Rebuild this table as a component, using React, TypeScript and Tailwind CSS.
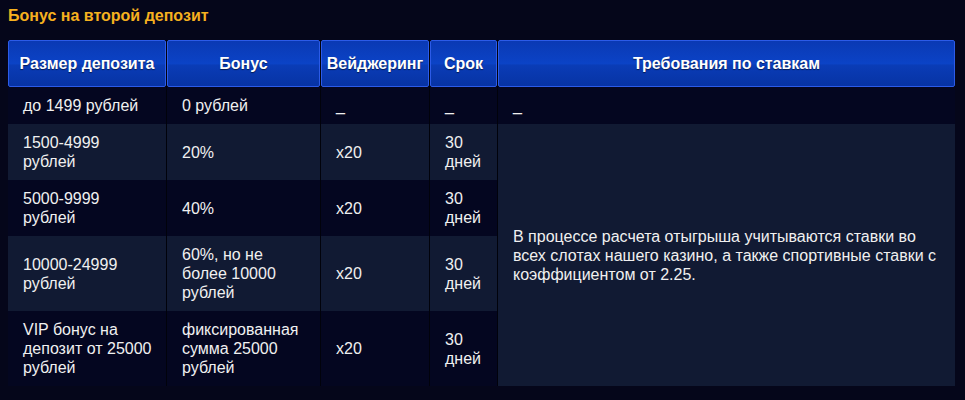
import type { FC, ReactNode } from "react";

type Row = {
  size: ReactNode;
  bonus: ReactNode;
  wager: string;
  term: string;
};

const rows: Row[] = [
  { size: "до 1499 рублей", bonus: "0 рублей", wager: "_", term: "_" },
  { size: "1500-4999 рублей", bonus: "20%", wager: "x20", term: "30 дней" },
  { size: "5000-9999 рублей", bonus: "40%", wager: "x20", term: "30 дней" },
  {
    size: "10000-24999 рублей",
    bonus: "60%, но не более 10000 рублей",
    wager: "x20",
    term: "30 дней",
  },
  {
    size: "VIP бонус на депозит от 25000 рублей",
    bonus: "фиксированная сумма 25000 рублей",
    wager: "x20",
    term: "30 дней",
  },
];

const headers = ["Размер депозита", "Бонус", "Вейджеринг", "Срок", "Требования по ставкам"];

const Head: FC<{ children: ReactNode }> = ({ children }) => (
  <div className="flex h-[47px] items-center justify-center rounded-[2px] border border-[#2c5be8] bg-[linear-gradient(to_bottom,#0a39b4_0%,#0b43c6_50%,#0a3cb6_54%,#0733a4_100%)] px-1 text-center text-[16px] font-bold text-white [text-shadow:0_1px_1px_rgba(0,0,0,0.55)]">
    {children}
  </div>
);

const Cell: FC<{ children: ReactNode; light: boolean }> = ({ children, light }) => (
  <div
    className={`flex items-center py-[9px] pl-[15px] pr-[12px] ${light ? "bg-[#111a33]" : "bg-[#040620]"}`}
  >
    <span>{children}</span>
  </div>
);

export default function App() {
  return (
    <div className="min-h-[400px] bg-[#05061a] pl-[8px] pr-[10px] pt-[7px] font-['Liberation_Sans',Arial,sans-serif] text-[16px] leading-[19px] text-[#f0f0f0]">
      <h2 className="text-[16px] font-bold leading-[18px] text-[#f6b11f]">
        Бонус на второй депозит
      </h2>

      <div className="mt-[15px] grid grid-cols-[158px_153px_108px_67px_457px] gap-x-px bg-[#01020b]">
        {headers.map((h) => (
          <Head key={h}>{h}</Head>
        ))}

        {rows.map((r, i) => {
          const light = i % 2 === 1;
          return [
            <Cell key={`s${i}`} light={light}>{r.size}</Cell>,
            <Cell key={`b${i}`} light={light}>{r.bonus}</Cell>,
            <Cell key={`w${i}`} light={light}>{r.wager}</Cell>,
            <Cell key={`t${i}`} light={light}>{r.term}</Cell>,
            i === 0 ? (
              <Cell key="req0" light={false}>_</Cell>
            ) : i === 1 ? (
              <div
                key="req"
                className="row-span-4 flex items-center bg-[#111a33] pl-[15px] pr-[12px]"
              >
                <p>
                  В процессе расчета отыгрыша учитываются ставки во всех слотах нашего
                  казино, а также спортивные ставки с коэффициентом от 2.25.
                </p>
              </div>
            ) : null,
          ];
        })}
      </div>
    </div>
  );
}
